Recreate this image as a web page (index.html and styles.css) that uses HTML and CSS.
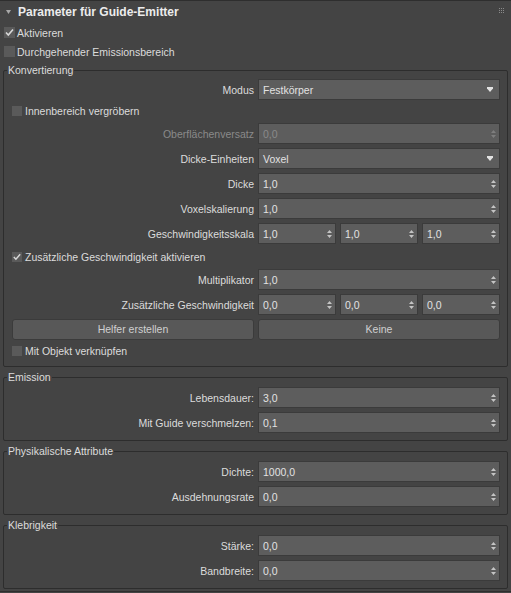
FILE: index.html
```html
<!DOCTYPE html>
<html>
<head>
<meta charset="utf-8">
<link rel="stylesheet" href="styles.css">
</head>
<body>
<div class="rollout">
  <div class="rollout-head">
    <svg class="caret" viewBox="0 0 5 4" width="5" height="4"><path d="M0 0H5L2.5 4Z" fill="#a8a8a8"/></svg>
    <span class="title">Parameter für Guide-Emitter</span>
    <svg class="grip" viewBox="0 0 6 6" width="6" height="6" fill="#8a8a8a"><rect x="0" y="0" width="1" height="1"/><rect x="2" y="0" width="1" height="1"/><rect x="4" y="0" width="1" height="1"/><rect x="0" y="2" width="1" height="1"/><rect x="2" y="2" width="1" height="1"/><rect x="4" y="2" width="1" height="1"/><rect x="0" y="4" width="1" height="1"/><rect x="2" y="4" width="1" height="1"/><rect x="4" y="4" width="1" height="1"/></svg>
  </div>

  <div class="check top"><span class="box"><svg viewBox="0 0 11 11" width="11" height="11"><path d="M2 5.5L4.3 8L9 2.5" fill="none" stroke="#d8d8d8" stroke-width="1.6"/></svg></span><span class="ctext">Aktivieren</span></div>
  <div class="check top"><span class="box"></span><span class="ctext">Durchgehender Emissionsbereich</span></div>

  <fieldset class="group">
    <legend>Konvertierung</legend>
    <div class="form">
      <div class="row"><span class="lbl">Modus</span><div class="field"><span>Festkörper</span><svg class="drop" viewBox="0 0 6 5" width="6" height="5"><path d="M0 0H6V1.5L3 5L0 1.5Z" fill="#e2e2e2"/></svg></div></div>
      <div class="check inner tight"><span class="box"></span><span class="ctext focus">Innenbereich vergröbern</span></div>
      <div class="row disabled"><span class="lbl">Oberflächenversatz</span><div class="field"><span>0,0</span><svg class="spin" viewBox="0 0 5 8" width="5" height="8"><path d="M0 3L2.5 0L5 3Z M0 5H5L2.5 8Z"/></svg></div></div>
      <div class="row"><span class="lbl">Dicke-Einheiten</span><div class="field"><span>Voxel</span><svg class="drop" viewBox="0 0 6 5" width="6" height="5"><path d="M0 0H6V1.5L3 5L0 1.5Z" fill="#e2e2e2"/></svg></div></div>
      <div class="row"><span class="lbl">Dicke</span><div class="field"><span>1,0</span><svg class="spin" viewBox="0 0 5 8" width="5" height="8"><path d="M0 3L2.5 0L5 3Z M0 5H5L2.5 8Z"/></svg></div></div>
      <div class="row"><span class="lbl">Voxelskalierung</span><div class="field"><span>1,0</span><svg class="spin" viewBox="0 0 5 8" width="5" height="8"><path d="M0 3L2.5 0L5 3Z M0 5H5L2.5 8Z"/></svg></div></div>
      <div class="row"><span class="lbl">Geschwindigkeitsskala</span>
        <div class="triple">
          <div class="field"><span>1,0</span><svg class="spin" viewBox="0 0 5 8" width="5" height="8"><path d="M0 3L2.5 0L5 3Z M0 5H5L2.5 8Z"/></svg></div>
          <div class="field"><span>1,0</span><svg class="spin" viewBox="0 0 5 8" width="5" height="8"><path d="M0 3L2.5 0L5 3Z M0 5H5L2.5 8Z"/></svg></div>
          <div class="field"><span>1,0</span><svg class="spin" viewBox="0 0 5 8" width="5" height="8"><path d="M0 3L2.5 0L5 3Z M0 5H5L2.5 8Z"/></svg></div>
        </div>
      </div>
      <div class="check inner"><span class="box"><svg viewBox="0 0 11 11" width="11" height="11"><path d="M2 5.5L4.3 8L9 2.5" fill="none" stroke="#d8d8d8" stroke-width="1.6"/></svg></span><span class="ctext">Zusätzliche Geschwindigkeit aktivieren</span></div>
      <div class="row"><span class="lbl">Multiplikator</span><div class="field"><span>1,0</span><svg class="spin" viewBox="0 0 5 8" width="5" height="8"><path d="M0 3L2.5 0L5 3Z M0 5H5L2.5 8Z"/></svg></div></div>
      <div class="row"><span class="lbl">Zusätzliche Geschwindigkeit</span>
        <div class="triple">
          <div class="field"><span>0,0</span><svg class="spin" viewBox="0 0 5 8" width="5" height="8"><path d="M0 3L2.5 0L5 3Z M0 5H5L2.5 8Z"/></svg></div>
          <div class="field"><span>0,0</span><svg class="spin" viewBox="0 0 5 8" width="5" height="8"><path d="M0 3L2.5 0L5 3Z M0 5H5L2.5 8Z"/></svg></div>
          <div class="field"><span>0,0</span><svg class="spin" viewBox="0 0 5 8" width="5" height="8"><path d="M0 3L2.5 0L5 3Z M0 5H5L2.5 8Z"/></svg></div>
        </div>
      </div>
      <div class="row"><div class="btn">Helfer erstellen</div><div class="btn">Keine</div></div>
      <div class="check inner tight"><span class="box"></span><span class="ctext">Mit Objekt verknüpfen</span></div>
    </div>
  </fieldset>

  <fieldset class="group">
    <legend>Emission</legend>
    <div class="form">
      <div class="row"><span class="lbl">Lebensdauer:</span><div class="field"><span>3,0</span><svg class="spin" viewBox="0 0 5 8" width="5" height="8"><path d="M0 3L2.5 0L5 3Z M0 5H5L2.5 8Z"/></svg></div></div>
      <div class="row"><span class="lbl">Mit Guide verschmelzen:</span><div class="field"><span>0,1</span><svg class="spin" viewBox="0 0 5 8" width="5" height="8"><path d="M0 3L2.5 0L5 3Z M0 5H5L2.5 8Z"/></svg></div></div>
    </div>
  </fieldset>

  <fieldset class="group">
    <legend>Physikalische Attribute</legend>
    <div class="form">
      <div class="row"><span class="lbl">Dichte:</span><div class="field"><span>1000,0</span><svg class="spin" viewBox="0 0 5 8" width="5" height="8"><path d="M0 3L2.5 0L5 3Z M0 5H5L2.5 8Z"/></svg></div></div>
      <div class="row"><span class="lbl">Ausdehnungsrate</span><div class="field"><span>0,0</span><svg class="spin" viewBox="0 0 5 8" width="5" height="8"><path d="M0 3L2.5 0L5 3Z M0 5H5L2.5 8Z"/></svg></div></div>
    </div>
  </fieldset>

  <fieldset class="group">
    <legend>Klebrigkeit</legend>
    <div class="form">
      <div class="row"><span class="lbl">Stärke:</span><div class="field"><span>0,0</span><svg class="spin" viewBox="0 0 5 8" width="5" height="8"><path d="M0 3L2.5 0L5 3Z M0 5H5L2.5 8Z"/></svg></div></div>
      <div class="row"><span class="lbl">Bandbreite:</span><div class="field"><span>0,0</span><svg class="spin" viewBox="0 0 5 8" width="5" height="8"><path d="M0 3L2.5 0L5 3Z M0 5H5L2.5 8Z"/></svg></div></div>
    </div>
  </fieldset>
  <div class="rollout-end"></div>
</div>
</body>
</html>
```

FILE: styles.css
```css
* { box-sizing: border-box; }
html, body { margin: 0; padding: 0; background: #444444; }
body {
  font-family: "Liberation Sans", Arial, sans-serif;
  font-size: 10.5px;
  color: #dcdcdc;
  width: 511px;
  height: 593px;
  overflow: hidden;
}
.rollout { border-top: 1px solid #2e2e2e; }
.rollout-head {
  height: 22px;
  display: flex;
  align-items: center;
  padding: 0 6px 0 6px;
}
.caret { margin-right: 7px; flex: none; }
.title { font-weight: bold; font-size: 12px; color: #ececec; flex: 1; }
.grip { flex: none; margin-top: -2px; }

.check { display: flex; align-items: center; height: 19px; white-space: nowrap; }
.check.top { padding-left: 4px; }
.check.inner { height: 17px; }
.check.tight { margin-top: -2px; }
.box {
  width: 11px; height: 11px;
  background: #5a5a5a;
  margin-right: 2px;
  flex: none;
  display: block;
}
.box svg { display: block; }
.check.inner .box { width: 10px; height: 10px; margin-right: 1px; }
.check.inner .box svg { width: 10px; height: 10px; }
.check.inner .ctext { padding: 0 1px; border: 1px solid transparent; height: 17px; display: flex; align-items: center; }
.ctext.focus { border: 1px dotted #a0a0a0; }

.group {
  margin: 2px 3px 0;
  padding: 2px 7px 7px 8px;
  border: 1px solid #2d2d2d;
  border-radius: 2px;
  min-width: 0;
}
.group + .group { margin-top: 3px; padding-top: 3px; }
.group legend {
  padding: 0 1px;
  margin-left: -5px;
  line-height: 14px;
  color: #dcdcdc;
}
.form { display: flex; flex-direction: column; gap: 4px; }
.row {
  display: grid;
  grid-template-columns: 1fr 1fr;
  column-gap: 4px;
  align-items: center;
}
.lbl { text-align: right; white-space: nowrap; }
.field {
  height: 21px;
  background: #5d5d5d;
  border: 1px solid #3b3b3b;
  display: flex;
  align-items: center;
  justify-content: space-between;
  padding: 0 3px 0 4px;
  color: #e2e2e2;
}
.spin { fill: #c4c4c4; flex: none; }
.drop { flex: none; margin-right: 3px; }
.disabled .lbl, .disabled .field { color: #8a8a8a; }
.disabled .spin { fill: #7e7e7e; }
.triple { display: grid; grid-template-columns: repeat(3, 1fr); column-gap: 4px; }
.btn {
  height: 21px;
  background: #585858;
  border: 1px solid #3b3b3b;
  border-radius: 3px;
  text-align: center;
  line-height: 19px;
  color: #d0d0d0;
}
.rollout-end { margin-top: 2px; border-top: 1px solid #2e2e2e; }
```
